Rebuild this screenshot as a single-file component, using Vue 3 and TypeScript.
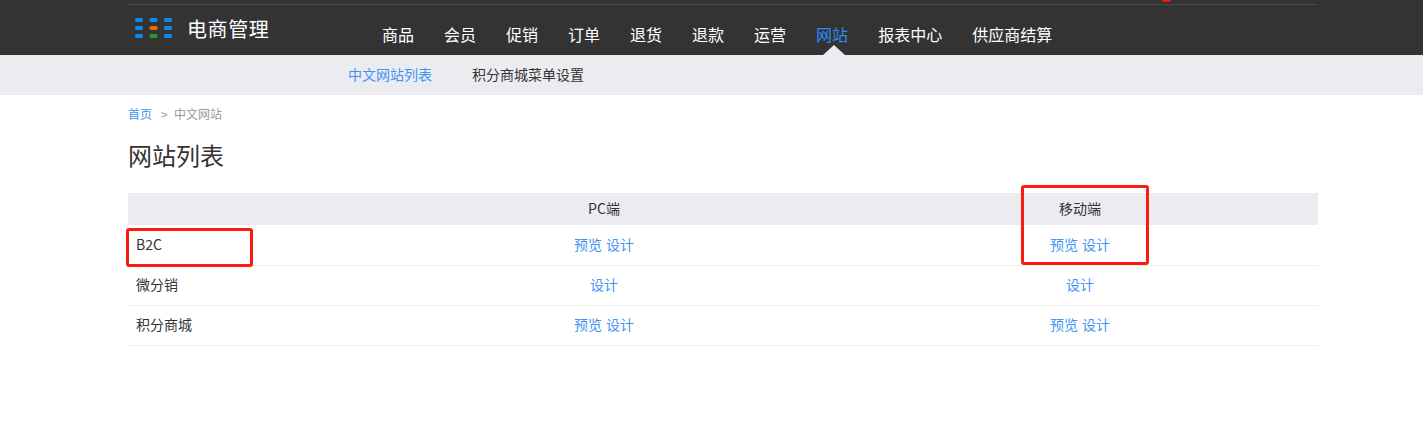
<script setup lang="ts">
const navItems: string[] = ['商品', '会员', '促销', '订单', '退货', '退款', '运营', '网站', '报表中心', '供应商结算']
const rows = [
  { name: 'B2C', pc: true, mobile: true },
  { name: '微分销', pc: false, mobile: false },
  { name: '积分商城', pc: true, mobile: true },
]
</script>

<template>
  <div class="page">
    <header class="header">
      <div class="wrap top-line"></div>
      <div class="wrap head-row">
        <div class="logo">
          <svg class="logo-mark" width="37" height="20" viewBox="0 0 37 20" aria-hidden="true">
            <g fill="#0a8cf0">
              <rect x="0" y="0" width="8" height="4" rx="1.6" />
              <rect x="14.500" y="0" width="8" height="4" rx="1.6" />
              <rect x="29" y="0" width="8" height="4" rx="1.6" />
              <rect x="0" y="8" width="8" height="4" rx="1.6" />
              <rect x="29" y="8" width="8" height="4" rx="1.6" />
              <rect x="0" y="16" width="8" height="4" rx="1.6" />
              <rect x="29" y="16" width="8" height="4" rx="1.6" />
            </g>
            <rect x="14.500" y="8" width="8" height="4" rx="1.6" fill="#f0640a" />
            <rect x="14.500" y="16" width="8" height="4" rx="1.6" fill="#229a2b" />
          </svg>
          <span class="logo-text">电商管理</span>
        </div>
        <nav class="nav">
          <a v-for="item in navItems" :key="item" class="nav-item" :class="{ active: item === '网站' }">{{ item }}</a>
        </nav>
      </div>
      <span class="red-dot"></span>
    </header>

    <div class="subnav">
      <div class="wrap subnav-row">
        <a class="sub-item current">中文网站列表</a>
        <a class="sub-item">积分商城菜单设置</a>
      </div>
    </div>

    <main class="wrap main">
      <div class="crumbs">
        <a class="crumb-link">首页</a>
        <span class="crumb-sep">&gt;</span>
        <span>中文网站</span>
      </div>
      <h1 class="title">网站列表</h1>

      <table class="table">
        <colgroup>
          <col class="c1" />
          <col class="c2" />
          <col class="c2" />
        </colgroup>
        <thead>
          <tr>
            <th></th>
            <th>PC端</th>
            <th>移动端</th>
          </tr>
        </thead>
        <tbody>
          <tr v-for="row in rows" :key="row.name">
            <td class="name">{{ row.name }}</td>
            <td class="links">
              <a v-if="row.pc" class="preview">预览</a>
              <a>设计</a>
            </td>
            <td class="links">
              <a v-if="row.mobile" class="preview">预览</a>
              <a>设计</a>
            </td>
          </tr>
        </tbody>
      </table>
    </main>

    <div class="mark mark-a"></div>
    <div class="mark mark-b"></div>
  </div>
</template>

<style>
html, body { margin: 0; background: #fff; }
</style>

<style scoped>
.page {
  position: relative;
  height: 437px;
  overflow: hidden;
  background: #fff;
  font-family: "Noto Sans CJK SC", "Liberation Sans", sans-serif;
  color: #333;
}
.wrap { width: 1190px; margin-left: 128px; }
.header { position: relative; height: 55px; background: #333; box-sizing: border-box; padding-top: 4px; }
.top-line { height: 1px; background: #4a4a4a; }
.head-row { display: flex; height: 50px; }
.logo { display: flex; align-items: center; width: 254px; padding-left: 7px; box-sizing: border-box; height: 50px; }
.logo-mark { flex: none; margin-top: -4px; margin-right: 16px; filter: blur(0.3px); }
.logo-text { color: #fff; font-size: 20px; line-height: 28px; white-space: nowrap; margin-top: -2px; margin-left: -1px; letter-spacing: 0.6px; }
.nav { display: flex; gap: 30px; height: 50px; }
.nav-item { position: relative; color: #fff; font-size: 16px; line-height: 58px; height: 50px; white-space: nowrap; }
.nav-item.active { color: #2f8cf5; }
.nav-item.active::after {
  content: "";
  position: absolute;
  left: 7px;
  bottom: 0;
  width: 0;
  height: 0;
  border-left: 11px solid transparent;
  border-right: 11px solid transparent;
  border-bottom: 10px solid #ecebf0;
}
.red-dot { position: absolute; left: 1162px; top: 0; width: 9px; height: 2px; background: #e81a12; border-radius: 0 0 5px 5px; }
.subnav { height: 40px; background: #ecebf0; }
.subnav-row { display: flex; gap: 40px; padding-left: 220px; box-sizing: border-box; }
.sub-item { font-size: 14px; line-height: 38px; color: #333; white-space: nowrap; }
.sub-item.current { color: #3f93f7; }
.main { display: block; }
.crumbs { display: flex; font-size: 12px; line-height: 18px; color: #999; padding-top: 10px; }
.crumb-link { color: #3f93f7; }
.crumb-sep { margin: 0 9px; width: 4px; }
.title { margin: 0; padding-top: 14px; font-size: 24px; font-weight: 400; line-height: 36px; color: #333; }
.table { width: 100%; margin-top: 20px; border-collapse: collapse; table-layout: fixed; font-size: 14px; }
.c1 { width: 20%; }
.c2 { width: 40%; }
th { height: 32px; padding: 0 0 2px; box-sizing: border-box; background: #ecebf0; font-weight: 400; color: #333; text-align: center; font-size: 14px; }
td { height: 40px; padding: 0 0 2px; border-bottom: 1px solid #ededed; box-sizing: border-box; }
.name { padding-left: 8px; color: #333; }
.links { text-align: center; color: #3f93f7; }
.preview { margin-right: 4px; }
.links a { display: inline-block; }
.mark { position: absolute; border: 3px solid #fa1c10; border-radius: 3px; box-sizing: border-box; }
.mark-a { left: 126px; top: 228px; width: 127px; height: 39px; }
.mark-b { left: 1021px; top: 185px; width: 128px; height: 80px; }
</style>
